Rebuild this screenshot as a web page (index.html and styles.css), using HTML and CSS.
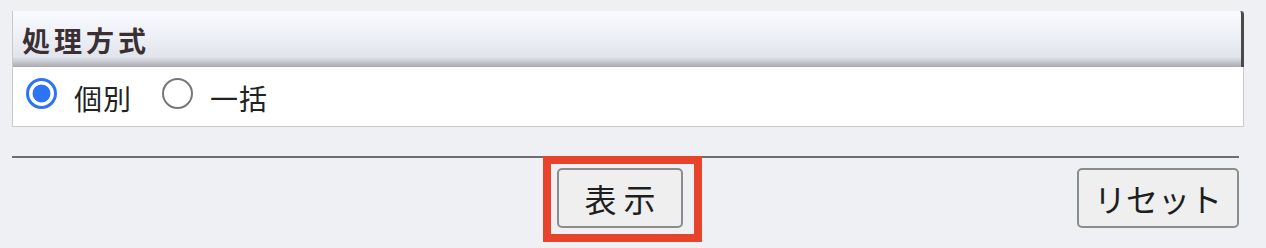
FILE: index.html
```html
<!DOCTYPE html>
<html lang="ja">
<head>
<meta charset="utf-8">
<title>処理方式</title>
<link rel="stylesheet" href="styles.css">
</head>
<body>
<div class="page">
  <div class="panel">
    <div class="panel-head">処理方式</div>
    <div class="panel-body">
      <label class="opt"><input type="radio" name="mode" checked><span class="opt-text">個別</span></label>
      <label class="opt"><input type="radio" name="mode"><span class="opt-text">一括</span></label>
    </div>
  </div>
  <div class="sep"></div>
  <div class="actions">
    <div class="primary-wrap"><button class="btn btn-show" type="button">表 示</button><span class="highlight"></span></div>
    <button class="btn btn-reset" type="button">リセット</button>
  </div>
</div>
</body>
</html>
```

FILE: styles.css
```css
html, body {
  margin: 0;
  padding: 0;
  background: #eff0f4;
}
body {
  font-family: "Noto Sans CJK JP", "Noto Sans", sans-serif;
  color: #222;
}
.page {
  padding: 11px 0 20px 12px;
  min-height: 248px;
  box-sizing: border-box;
}
.panel {
  width: 1232px;
  box-sizing: border-box;
  border: 1px solid #c9c9cc;
  background: #fff;
}
.panel-head {
  height: 56px;
  box-sizing: border-box;
  display: flex;
  align-items: center;
  padding-left: 9px;
  padding-top: 1px;
  font-size: 28px;
  font-weight: bold;
  letter-spacing: 4px;
  color: #3a3034;
  background: linear-gradient(#f9faff 0%, #eef0f7 45%, #e2e4ec 82%, #a9aab0 100%);
  border-right: 3px solid #4a4a4e;
  border-top-right-radius: 4px;
  margin-right: -1px;
  margin-top: -1px;
}
.panel-body {
  height: 59px;
  display: flex;
  align-items: center;
  padding-left: 13px;
}
.opt {
  display: flex;
  align-items: center;
  margin-right: 30px;
}
.opt input {
  appearance: none;
  -webkit-appearance: none;
  margin: 0 17px 0 0;
  width: 31px;
  height: 31px;
  box-sizing: border-box;
  border-radius: 50%;
  border: 2px solid #777;
  background: #fff;
  position: relative;
  top: -3px;
}
.opt input:checked {
  border: 3px solid #2d73f6;
  background: radial-gradient(circle, #2d73f6 0 8.5px, #fff 9.3px);
}
.opt-text {
  font-size: 28px;
  letter-spacing: 1px;
  line-height: 1;
  color: #222;
  position: relative;
  top: 1px;
}
.sep {
  width: 1227px;
  height: 2px;
  background: #6e6e70;
  margin-top: 29px;
}
.actions {
  display: flex;
  align-items: flex-start;
  margin-top: 10px;
  width: 1227px;
}
.primary-wrap {
  position: relative;
  display: flex;
  margin-left: 545px;
}
.highlight {
  position: absolute;
  left: -14px;
  top: -12px;
  width: 159px;
  height: 86px;
  box-sizing: border-box;
  border: 8px solid #e8432b;
  pointer-events: none;
}
.btn {
  height: 60px;
  box-sizing: border-box;
  font-family: "Noto Sans CJK JP", "Noto Sans", sans-serif;
  font-size: 32px;
  color: #1e1e1e;
  background: #efefef;
  border: 2px solid #8c8c8c;
  border-radius: 5px;
  padding: 0;
  display: flex;
  align-items: center;
  justify-content: center;
  line-height: 1;
}
.btn-show {
  width: 126px;
}
.btn-reset {
  width: 162px;
  margin-left: auto;
}
```
